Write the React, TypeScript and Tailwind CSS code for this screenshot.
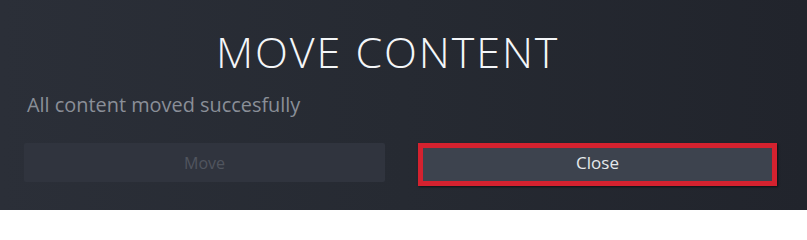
import React from 'react';

export default function App() {
  return (
    <div
      className="w-[807px] h-[210px] overflow-hidden bg-gradient-to-r from-[#2b2f38] via-[#262a32] to-[#21242c] text-white"
      style={{ fontFamily: '"Open Sans", "Noto Sans", sans-serif' }}
    >
      <div className="pl-[24px] pr-[30px]">
        <h1 className="pt-[26px] pl-[192px] text-[43px] leading-[52px] font-[350] tracking-[0.045em] text-[#f4f6f8]">
          MOVE CONTENT
        </h1>
        <p className="mt-[14px] pl-[3px] text-[19.9px] leading-[25px] text-[#8a8f98]">
          All content moved succesfully
        </p>
        <div className="mt-[26px] flex items-start gap-[33px]">
          <button className="w-[361px] h-[39px] rounded-[2px] bg-[#30343e] text-[16px] text-[#50555e]">
            Move
          </button>
          <button className="w-[359px] h-[43px] pb-[3px] border-[5px] border-[#d4222f] bg-[#3d434e] text-[17px] text-[#e6e9ec] shadow-[1px_1px_2px_rgba(0,0,0,0.6)]">
            Close
          </button>
        </div>
      </div>
    </div>
  );
}
